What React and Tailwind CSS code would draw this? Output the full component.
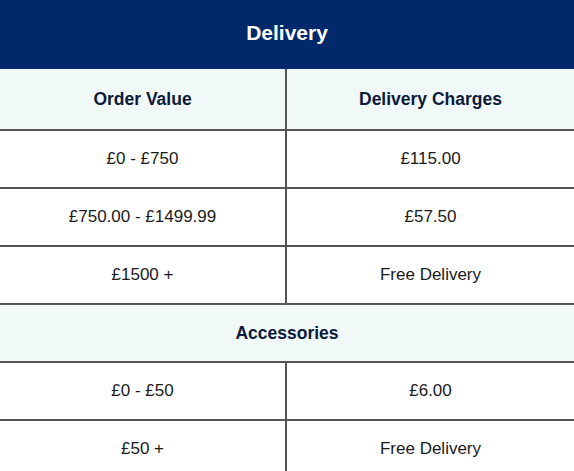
const rows = [
  ["£0 - £750", "£115.00"],
  ["£750.00 - £1499.99", "£57.50"],
  ["£1500 +", "Free Delivery"],
];

const accessories = [
  ["£0 - £50", "£6.00"],
  ["£50 +", "Free Delivery"],
];

const Row = ({ left, right }) => (
  <div className="grid grid-cols-2 h-[58px] border-t-2 border-[#555555] bg-white text-[#1a1a1a] text-[17px]">
    <div className="flex items-center justify-center border-r-2 border-[#555555]">{left}</div>
    <div className="flex items-center justify-center">{right}</div>
  </div>
);

export default function App() {
  return (
    <div className="w-[574px] h-[471px] overflow-hidden bg-white" style={{ fontFamily: '"Liberation Sans", Arial, sans-serif' }}>
      <div className="h-[69px] bg-[#00296b] flex items-center justify-center pb-1 text-white font-bold text-[21px]">
        Delivery
      </div>
      <div className="grid grid-cols-2 h-[60px] bg-[#f0f9f8] text-[#0d1a3c] font-bold text-[17.5px]">
        <div className="flex items-center justify-center border-r-2 border-[#555555]">Order Value</div>
        <div className="flex items-center justify-center">Delivery Charges</div>
      </div>
      {rows.map(([l, r]) => (
        <Row key={l} left={l} right={r} />
      ))}
      <div className="h-[58px] border-t-2 border-[#555555] bg-[#f0f9f8] flex items-center justify-center text-[#0d1a3c] font-bold text-[17.5px]">
        Accessories
      </div>
      {accessories.map(([l, r]) => (
        <Row key={l} left={l} right={r} />
      ))}
    </div>
  );
}
